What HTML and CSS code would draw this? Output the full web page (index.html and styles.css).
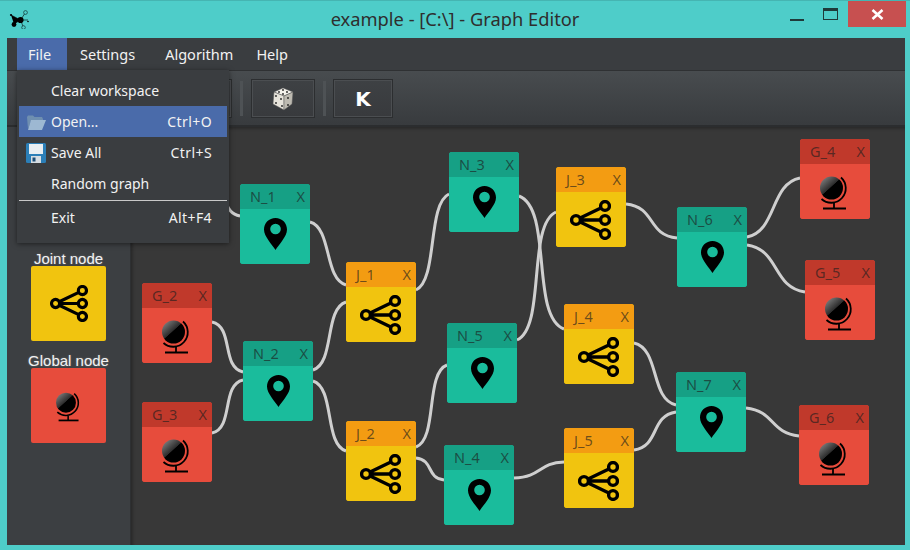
FILE: index.html
```html
<!DOCTYPE html>
<html lang="en">
<head>
    <meta charset="UTF-8">
    <title>Graph Editor</title>
    <link rel="stylesheet" href="styles.css">
</head>
<body>

<svg class="defs" width="0" height="0">
    <defs>
        <linearGradient id="sphereShine" x1="0.15" y1="0.1" x2="0.6" y2="0.6">
            <stop offset="0" stop-color="#777"/>
            <stop offset="0.7" stop-color="#2c2c2c"/>
            <stop offset="0.74" stop-color="#000"/>
        </linearGradient>
        <symbol id="globe" viewBox="0 0 30 34">
            <circle cx="11.5" cy="12" r="11.5" fill="url(#sphereShine)"/>
            <path d="M21 1.5 A14.5 14.5 0 0 1 1.5 23" fill="none" stroke="#000" stroke-width="1.8"/>
            <path d="M14 27 V32" stroke="#000" stroke-width="1.8"/>
            <path d="M3 32.5 H26" stroke="#000" stroke-width="2"/>
        </symbol>
        <symbol id="share" viewBox="0 0 41 40">
            <path d="M6 20 L35 6 M6 20 H35 M6 20 L35 34" stroke="#000" stroke-width="3.4"/>
            <g fill="#f1c40f" stroke="#000" stroke-width="3.4">
                <circle cx="6" cy="20" r="4.4"/>
                <circle cx="35" cy="6" r="4.4"/>
                <circle cx="35" cy="20" r="4.4"/>
                <circle cx="35" cy="34" r="4.4"/>
            </g>
        </symbol>
        <symbol id="pin" viewBox="0 0 23 32">
            <path d="M11.5 0 C5 0 0 5 0 11.5 C0 18.5 8 26.5 11.5 32 C15 26.5 23 18.5 23 11.5 C23 5 18 0 11.5 0 Z" fill="#000"/>
            <circle cx="11.5" cy="11" r="5.3" fill="#1abc9c"/>
        </symbol>
    </defs>
</svg>

<div class="window">
    <div class="titlebar">
        <svg class="app-logo" width="20" height="20" viewBox="9 8 20 20">
            <path d="M11 14 L20.5 19 L14 23 M20.5 19 L25.5 11.5 M20.5 19 L23.5 26.5 M20.5 19 H28" stroke="#000" stroke-width="0.6"/>
            <circle cx="20.5" cy="19" r="3.1"/>
            <circle cx="14" cy="23.5" r="2.4"/>
            <circle cx="11" cy="14" r="1.1"/>
            <circle cx="28" cy="20.5" r="0.8"/>
            <circle cx="25.5" cy="11.5" r="1.9" fill="#4ecdc9" stroke="#000" stroke-width="0.5"/>
            <circle cx="23.5" cy="26.5" r="1.8" fill="#4ecdc9" stroke="#000" stroke-width="0.5"/>
        </svg>
        <div class="title">example - [C:\] - Graph Editor</div>
        <div class="win-controls">
            <span class="win-min"></span>
            <span class="win-max"></span>
            <span class="win-close">
                <svg width="13" height="11" viewBox="0 0 13 11"><path d="M1.5 1 L11.5 10 M11.5 1 L1.5 10" stroke="#fff" stroke-width="2.6"/></svg>
            </span>
        </div>
    </div>

    <div class="frame">
        <div class="menubar">
            <div class="menubar-item active">File</div>
            <div class="menubar-item">Settings</div>
            <div class="menubar-item">Algorithm</div>
            <div class="menubar-item">Help</div>
        </div>

        <div class="toolbar">
            <div class="tool-btn tool-wide"></div>
            <div class="tool-sep"></div>
            <div class="tool-btn tool-wide"></div>
            <div class="tool-sep"></div>
            <div class="tool-btn tool-dice">
                <svg width="22" height="24" viewBox="0 0 22 24">
                    <path d="M2 5 L11 1 L21 5 L12 9 Z" fill="#f4f2ec" stroke="#555" stroke-width="0.5"/>
                    <path d="M2 5 L12 9 L12 23 L1 17 Z" fill="#e6e3da" stroke="#555" stroke-width="0.5"/>
                    <path d="M21 5 L20 17 L12 23 L12 9 Z" fill="#bdbab1" stroke="#555" stroke-width="0.5"/>
                    <g fill="#222">
                        <circle cx="11" cy="3" r="0.9"/><circle cx="7" cy="5" r="0.9"/><circle cx="15" cy="5" r="0.9"/><circle cx="11" cy="7" r="0.9"/>
                        <circle cx="4" cy="9" r="0.9"/><circle cx="9" cy="12" r="0.9"/><circle cx="4" cy="16" r="0.9"/><circle cx="10" cy="19" r="0.9"/>
                        <circle cx="16" cy="11" r="0.9"/><circle cx="16" cy="18" r="0.9"/>
                    </g>
                </svg>
            </div>
            <div class="tool-sep"></div>
            <div class="tool-btn tool-k">K</div>
        </div>

        <div class="workspace">
            <div class="sidebar">
                <div class="palette-item">
                    <div class="palette-label">Joint node</div>
                    <div class="palette-box yellow"><svg class="icon-share-sm"><use href="#share"/></svg></div>
                </div>
                <div class="palette-item">
                    <div class="palette-label">Global node</div>
                    <div class="palette-box red"><svg class="icon-globe-sm"><use href="#globe"/></svg></div>
                </div>
            </div>

            <div class="canvas">
                <svg class="wires" width="774" height="418" viewBox="131 127 774 418">
                    <path d="M212 190 C230 193 222 213 240 216"/>
                    <path d="M310 222 C332 228 324 279 346 285"/>
                    <path d="M212 322 C234 327 221 367 243 372"/>
                    <path d="M212 433 C234 428 221 385 243 380"/>
                    <path d="M313 370 C335 363 324 309 346 302"/>
                    <path d="M313 381 C335 388 324 444 346 451"/>
                    <path d="M416 290 C438 280 427 204 449 194"/>
                    <path d="M416 447 C438 439 425 373 447 365"/>
                    <path d="M416 458 C434 460 426 478 444 480"/>
                    <path d="M519 196 C553 209 530 316 564 329"/>
                    <path d="M517 340 C546 327 527 225 556 212"/>
                    <path d="M514 478 C542 477 538 463 564 462"/>
                    <path d="M626 204 C656 207 647 235 677 238"/>
                    <path d="M634 343 C660 349 650 399 676 405"/>
                    <path d="M634 450 C660 446 650 416 676 412"/>
                    <path d="M747 237 C777 231 770 184 800 178"/>
                    <path d="M747 245 C780 250 772 287 805 292"/>
                    <path d="M746 408 C775 411 770 433 799 436"/>
                </svg>

                <div class="node green" style="left:109px;top:57px"><div class="node-head"><span>N_1</span><span>X</span></div><div class="node-body"><svg class="icon-pin"><use href="#pin"/></svg></div></div>
                <div class="node red" style="left:11px;top:156px"><div class="node-head"><span>G_2</span><span>X</span></div><div class="node-body"><svg class="icon-globe"><use href="#globe"/></svg></div></div>
                <div class="node red" style="left:11px;top:275px"><div class="node-head"><span>G_3</span><span>X</span></div><div class="node-body"><svg class="icon-globe"><use href="#globe"/></svg></div></div>
                <div class="node green" style="left:112px;top:214px"><div class="node-head"><span>N_2</span><span>X</span></div><div class="node-body"><svg class="icon-pin"><use href="#pin"/></svg></div></div>
                <div class="node yellow" style="left:215px;top:135px"><div class="node-head"><span>J_1</span><span>X</span></div><div class="node-body"><svg class="icon-share"><use href="#share"/></svg></div></div>
                <div class="node yellow" style="left:215px;top:294px"><div class="node-head"><span>J_2</span><span>X</span></div><div class="node-body"><svg class="icon-share"><use href="#share"/></svg></div></div>
                <div class="node green" style="left:318px;top:25px"><div class="node-head"><span>N_3</span><span>X</span></div><div class="node-body"><svg class="icon-pin"><use href="#pin"/></svg></div></div>
                <div class="node green" style="left:316px;top:196px"><div class="node-head"><span>N_5</span><span>X</span></div><div class="node-body"><svg class="icon-pin"><use href="#pin"/></svg></div></div>
                <div class="node green" style="left:313px;top:318px"><div class="node-head"><span>N_4</span><span>X</span></div><div class="node-body"><svg class="icon-pin"><use href="#pin"/></svg></div></div>
                <div class="node yellow" style="left:425px;top:40px"><div class="node-head"><span>J_3</span><span>X</span></div><div class="node-body"><svg class="icon-share"><use href="#share"/></svg></div></div>
                <div class="node yellow" style="left:433px;top:177px"><div class="node-head"><span>J_4</span><span>X</span></div><div class="node-body"><svg class="icon-share"><use href="#share"/></svg></div></div>
                <div class="node yellow" style="left:433px;top:301px"><div class="node-head"><span>J_5</span><span>X</span></div><div class="node-body"><svg class="icon-share"><use href="#share"/></svg></div></div>
                <div class="node green" style="left:546px;top:80px"><div class="node-head"><span>N_6</span><span>X</span></div><div class="node-body"><svg class="icon-pin"><use href="#pin"/></svg></div></div>
                <div class="node green" style="left:545px;top:245px"><div class="node-head"><span>N_7</span><span>X</span></div><div class="node-body"><svg class="icon-pin"><use href="#pin"/></svg></div></div>
                <div class="node red" style="left:669px;top:12px"><div class="node-head"><span>G_4</span><span>X</span></div><div class="node-body"><svg class="icon-globe"><use href="#globe"/></svg></div></div>
                <div class="node red" style="left:674px;top:133px"><div class="node-head"><span>G_5</span><span>X</span></div><div class="node-body"><svg class="icon-globe"><use href="#globe"/></svg></div></div>
                <div class="node red" style="left:668px;top:278px"><div class="node-head"><span>G_6</span><span>X</span></div><div class="node-body"><svg class="icon-globe"><use href="#globe"/></svg></div></div>
            </div>
        </div>

        <!-- File menu, opened -->
        <div class="dropdown">
            <div class="dropdown-item"><span class="dropdown-icon"></span><span class="dropdown-text">Clear workspace</span></div>
            <div class="dropdown-item selected">
                <span class="dropdown-icon">
                    <svg width="20" height="18" viewBox="0 0 20 18">
                        <path d="M2 16 L1 4 L2 2.5 H7 L8.5 4 H16 L17 6 V8 H5 Z" fill="#6f8fb0"/>
                        <path d="M2 17 L5 7 H20 L16 17 Z" fill="#9db8d2"/>
                    </svg>
                </span>
                <span class="dropdown-text">Open...</span><span class="dropdown-key">Ctrl+O</span>
            </div>
            <div class="dropdown-item">
                <span class="dropdown-icon">
                    <svg width="20" height="20" viewBox="0 0 20 20">
                        <rect width="20" height="20" rx="1.5" fill="#2b7fb8"/>
                        <rect x="3" y="1" width="14" height="10" fill="#e8eef2"/>
                        <rect x="5" y="13" width="10" height="7" fill="#d5dde3"/>
                        <rect x="6.5" y="14.5" width="3" height="4" fill="#1d4f78"/>
                    </svg>
                </span>
                <span class="dropdown-text">Save All</span><span class="dropdown-key">Ctrl+S</span>
            </div>
            <div class="dropdown-item"><span class="dropdown-icon"></span><span class="dropdown-text">Random graph</span></div>
            <div class="dropdown-sep"></div>
            <div class="dropdown-item"><span class="dropdown-icon"></span><span class="dropdown-text">Exit</span><span class="dropdown-key">Alt+F4</span></div>
        </div>
    </div>
</div>

</body>
</html>
```

FILE: styles.css
```css
body {
    margin: 0;
    font-family: "Noto Sans", sans-serif;
    font-size: 14px;
    color: #f2f2f2;
    overflow: hidden;
}

.defs {
    position: absolute;
}

.window {
    width: 910px;
    height: 550px;
    background-color: #4ecdc9;
    display: flex;
    flex-direction: column;
    border-top: 1px solid #45b5b2;
    box-sizing: border-box;
}

/* Title bar */
.titlebar {
    height: 37px;
    display: grid;
    grid-template-columns: 1fr auto 1fr;
}

.app-logo {
    margin: 8px 0 0 9px;
}

.title {
    font-size: 18.3px;
    color: #2e2e2e;
    padding-top: 5px;
}

.win-controls {
    display: flex;
    justify-content: flex-end;
    align-items: flex-start;
    padding-right: 4px;
}

.win-min {
    width: 14px;
    height: 2px;
    margin: 18px 19px 0 0;
    background-color: #1f3a3a;
}

.win-max {
    width: 15px;
    height: 12px;
    box-sizing: border-box;
    margin: 7px 10px 0 0;
    border: 1px solid #1f3a3a;
    border-top-width: 3px;
}

.win-close {
    width: 58px;
    height: 26px;
    background-color: #c75050;
    display: flex;
    justify-content: center;
    align-items: center;
}

/* Main frame */
.frame {
    position: relative;
    flex: 1;
    margin: 0 5px 5px 7px;
    display: flex;
    flex-direction: column;
    min-height: 0;
    background-color: #3a3d40;
}

.menubar {
    height: 32px;
    flex: none;
    display: flex;
    padding-left: 10px;
    background-color: #3a3d40;
}

.menubar-item {
    line-height: 33px;
    padding: 0 15px;
    font-size: 14.5px;
}

.menubar-item.active {
    width: 50px;
    box-sizing: border-box;
    padding: 0 0 0 11px;
    background-color: #4a6baa;
}

.menubar-item:nth-child(2) {
    padding-left: 13px;
}

.menubar-item:nth-child(4) {
    padding-left: 8px;
}

/* Toolbar */
.toolbar {
    height: 57px;
    flex: none;
    box-sizing: border-box;
    display: flex;
    align-items: flex-start;
    gap: 8px;
    padding: 9px 0 0 15px;
    background: linear-gradient(#484c4f, #383b3e);
    border-top: 1px solid #2f3133;
    border-bottom: 2px solid #2b2d2f;
}

.tool-btn {
    height: 39px;
    box-sizing: border-box;
    display: flex;
    justify-content: center;
    align-items: center;
    border: 1px solid #2c2e30;
    box-shadow: inset 0 0 0 1px #4b4e51;
    background: linear-gradient(#3e4144, #383a3d);
    margin-top: -1px;
}

.tool-wide {
    width: 95.5px;
}

.tool-dice {
    width: 64px;
}

.tool-k {
    width: 60px;
    margin-left: -1px;
    font-family: "DejaVu Sans", sans-serif;
    font-size: 20px;
    font-weight: bold;
    color: #fff;
}

.tool-sep {
    width: 3px;
    height: 35px;
    margin-top: 1px;
    background-color: #4e5255;
}

/* Workspace */
.workspace {
    flex: 1;
    display: flex;
    min-height: 0;
}

.sidebar {
    width: 124px;
    flex: none;
    box-sizing: border-box;
    display: flex;
    flex-direction: column;
    align-items: center;
    padding-top: 112px;
    background-color: #3c3f42;
    border-right: 1px solid #2e3032;
}

.palette-item {
    display: flex;
    flex-direction: column;
    align-items: center;
}

.palette-label {
    height: 27px;
    line-height: 39px;
    font-family: "Liberation Sans", sans-serif;
    font-size: 15px;
    text-shadow: 0 0 2px rgba(255, 255, 255, 0.3);
}

.palette-box {
    width: 75px;
    height: 75px;
    border-radius: 2px;
    display: flex;
    justify-content: center;
    align-items: center;
}

.canvas {
    position: relative;
    flex: 1;
    background-color: #383838;
    box-shadow: inset 2px 2px 3px rgba(0, 0, 0, 0.25);
    overflow: hidden;
}

.wires {
    position: absolute;
    left: 0;
    top: 0;
}

.wires path {
    fill: none;
    stroke: #cfcfcf;
    stroke-width: 3;
}

/* Nodes */
.node {
    position: absolute;
    width: 70px;
    height: 80px;
    border-radius: 3px;
    overflow: hidden;
    display: flex;
    flex-direction: column;
}

.node-head {
    height: 25px;
    flex: none;
    display: flex;
    justify-content: space-between;
    padding: 0 5px 0 10px;
    line-height: 24px;
    font-size: 14.5px;
    color: rgba(30, 30, 30, 0.65);
}

.node-body {
    flex: 1;
    display: flex;
    justify-content: center;
    align-items: center;
}

.green, .green .node-body {
    background-color: #1abc9c;
}

.green .node-head {
    background-color: #16a085;
}

.yellow, .yellow .node-body {
    background-color: #f1c40f;
}

.yellow .node-head {
    background-color: #f39c12;
}

.red, .red .node-body {
    background-color: #e74c3c;
}

.red .node-head {
    background-color: #c0392b;
}

/* Icons */
.icon-pin {
    width: 23px;
    height: 32px;
    margin-top: -6px;
}

.icon-share {
    width: 41px;
    height: 40px;
    margin-left: -2px;
}

.icon-share-sm {
    width: 38px;
    height: 37px;
}

.icon-globe {
    width: 30px;
    height: 34px;
    margin-top: 3px;
}

.icon-globe-sm {
    width: 26px;
    height: 30px;
    margin-top: 2px;
}

/* Dropdown */
.dropdown {
    position: absolute;
    left: 10px;
    top: 32px;
    width: 212px;
    height: 173px;
    box-sizing: border-box;
    padding: 5px 2px 0;
    background-color: #3a3d40;
    box-shadow: 0 1px 5px rgba(0, 0, 0, 0.5);
}

.dropdown-item {
    height: 31px;
    display: flex;
    align-items: center;
    font-size: 14px;
}

.dropdown-item.selected {
    background-color: #4a6baa;
}

.dropdown-icon {
    width: 20px;
    margin: 0 5px 0 7px;
    display: flex;
    flex: none;
}

.dropdown-text {
    flex: 1;
}

.dropdown-key {
    padding-right: 15px;
    letter-spacing: 0.4px;
}

.dropdown-sep {
    height: 1px;
    margin: 1px 0 1px;
    background-color: #c9c9c9;
}
```
